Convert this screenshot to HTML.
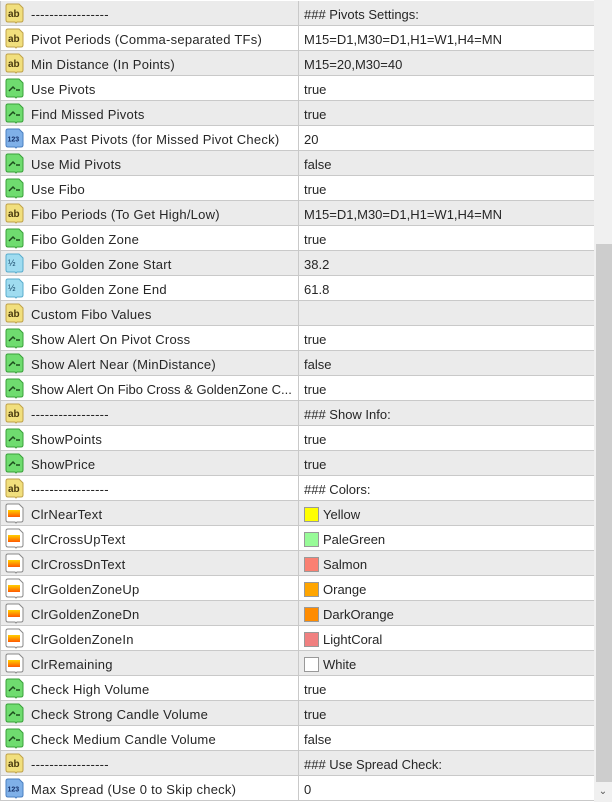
<!DOCTYPE html>
<html><head><meta charset="utf-8"><style>
*{margin:0;padding:0;box-sizing:border-box}
body{width:612px;height:802px;overflow:hidden;background:#fff;font-family:"Liberation Sans",Arial,sans-serif;font-size:13px;color:#262626;position:relative}
.r{position:absolute;left:0;width:594px;height:25px;border-bottom:1px solid #c9c9c9;border-left:1px solid #c9c9c9;margin-top:1px}
.g{background:#ebebeb}
.r svg{position:absolute;left:3px;top:2px;width:21px;height:21px}
.n{position:absolute;left:30px;top:6px;white-space:nowrap;letter-spacing:0.25px}
.v{position:absolute;left:297px;top:0;height:24px;border-left:1px solid #c9c9c9;padding-left:5px;padding-top:6px;width:297px;white-space:nowrap}
.s{display:inline-block;width:15px;height:15px;border:1px solid #999;vertical-align:-3px;margin-right:4px}
#sb{position:absolute;left:594px;top:0;width:18px;height:802px;background:#f0f0f0}
#th{position:absolute;left:596px;top:244px;width:16px;height:538px;background:#cdcdcd}
#dn{position:absolute;left:594px;top:784px;width:18px;height:18px;text-align:center;font-size:10px;color:#555;line-height:16px}
</style></head><body>
<svg width="0" height="0" style="position:absolute">
<defs>
<symbol id="ab" viewBox="0 0 21 21"><path d="M2 3 Q2 1 4 1 H15 L19 5 V17 Q19 19 17 19 H13 L12 20 L11 19 H4 Q2 19 2 17Z" fill="#f1df7d" stroke="#bfa24a"/><text x="4" y="14" font-size="10" font-family="Liberation Sans" font-weight="bold" fill="#4a3a10">ab</text></symbol>
<symbol id="bl" viewBox="0 0 21 21"><path d="M2 3 Q2 1 4 1 H15 L19 5 V17 Q19 19 17 19 H13 L12 20 L11 19 H4 Q2 19 2 17Z" fill="#6fdc6f" stroke="#3aa03a"/><path d="M5 13 L9 9 L11 11 M12 12 H16" stroke="#1d4d1d" stroke-width="1.5" fill="none"/></symbol>
<symbol id="nm" viewBox="0 0 21 21"><path d="M2 3 Q2 1 4 1 H15 L19 5 V17 Q19 19 17 19 H13 L12 20 L11 19 H4 Q2 19 2 17Z" fill="#7fb0e8" stroke="#4a7fc0"/><text x="3.5" y="13.5" font-size="7" font-family="Liberation Sans" font-weight="bold" fill="#14306a">123</text></symbol>
<symbol id="hf" viewBox="0 0 21 21"><path d="M2 3 Q2 1 4 1 H15 L19 5 V17 Q19 19 17 19 H13 L12 20 L11 19 H4 Q2 19 2 17Z" fill="#9fdcf0" stroke="#5aaccc"/><text x="4" y="13" font-size="9" font-family="Liberation Sans" fill="#1a4a6a">½</text></symbol>
<symbol id="cl" viewBox="0 0 21 21"><linearGradient id="og" x1="0" y1="0" x2="0" y2="1"><stop offset="0" stop-color="#ffd000"/><stop offset="1" stop-color="#ff5a00"/></linearGradient><path d="M2 3 Q2 1 4 1 H15 L19 5 V17 Q19 19 17 19 H13 L12 20 L11 19 H4 Q2 19 2 17Z" fill="#fff" stroke="#888"/><rect x="4" y="7" width="12" height="7" fill="url(#og)"/></symbol>
</defs></svg>

<div class="r g" style="top:0"><svg><use href="#ab"/></svg><span class="n">-----------------</span><span class="v">### Pivots Settings:</span></div>
<div class="r" style="top:25px"><svg><use href="#ab"/></svg><span class="n">Pivot Periods (Comma-separated TFs)</span><span class="v">M15=D1,M30=D1,H1=W1,H4=MN</span></div>
<div class="r g" style="top:50px"><svg><use href="#ab"/></svg><span class="n">Min Distance (In Points)</span><span class="v">M15=20,M30=40</span></div>
<div class="r" style="top:75px"><svg><use href="#bl"/></svg><span class="n">Use Pivots</span><span class="v">true</span></div>
<div class="r g" style="top:100px"><svg><use href="#bl"/></svg><span class="n">Find Missed Pivots</span><span class="v">true</span></div>
<div class="r" style="top:125px"><svg><use href="#nm"/></svg><span class="n">Max Past Pivots (for Missed Pivot Check)</span><span class="v">20</span></div>
<div class="r g" style="top:150px"><svg><use href="#bl"/></svg><span class="n">Use Mid Pivots</span><span class="v">false</span></div>
<div class="r" style="top:175px"><svg><use href="#bl"/></svg><span class="n">Use Fibo</span><span class="v">true</span></div>
<div class="r g" style="top:200px"><svg><use href="#ab"/></svg><span class="n">Fibo Periods (To Get High/Low)</span><span class="v">M15=D1,M30=D1,H1=W1,H4=MN</span></div>
<div class="r" style="top:225px"><svg><use href="#bl"/></svg><span class="n">Fibo Golden Zone</span><span class="v">true</span></div>
<div class="r g" style="top:250px"><svg><use href="#hf"/></svg><span class="n">Fibo Golden Zone Start</span><span class="v">38.2</span></div>
<div class="r" style="top:275px"><svg><use href="#hf"/></svg><span class="n">Fibo Golden Zone End</span><span class="v">61.8</span></div>
<div class="r g" style="top:300px"><svg><use href="#ab"/></svg><span class="n">Custom Fibo Values</span><span class="v"></span></div>
<div class="r" style="top:325px"><svg><use href="#bl"/></svg><span class="n">Show Alert On Pivot Cross</span><span class="v">true</span></div>
<div class="r g" style="top:350px"><svg><use href="#bl"/></svg><span class="n">Show Alert Near (MinDistance)</span><span class="v">false</span></div>
<div class="r" style="top:375px"><svg><use href="#bl"/></svg><span class="n" style="letter-spacing:0">Show Alert On Fibo Cross &amp; GoldenZone C...</span><span class="v">true</span></div>
<div class="r g" style="top:400px"><svg><use href="#ab"/></svg><span class="n">-----------------</span><span class="v">### Show Info:</span></div>
<div class="r" style="top:425px"><svg><use href="#bl"/></svg><span class="n">ShowPoints</span><span class="v">true</span></div>
<div class="r g" style="top:450px"><svg><use href="#bl"/></svg><span class="n">ShowPrice</span><span class="v">true</span></div>
<div class="r" style="top:475px"><svg><use href="#ab"/></svg><span class="n">-----------------</span><span class="v">### Colors:</span></div>
<div class="r g" style="top:500px"><svg><use href="#cl"/></svg><span class="n">ClrNearText</span><span class="v"><i class="s" style="background:#ffff00"></i>Yellow</span></div>
<div class="r" style="top:525px"><svg><use href="#cl"/></svg><span class="n">ClrCrossUpText</span><span class="v"><i class="s" style="background:#98fb98"></i>PaleGreen</span></div>
<div class="r g" style="top:550px"><svg><use href="#cl"/></svg><span class="n">ClrCrossDnText</span><span class="v"><i class="s" style="background:#fa8072"></i>Salmon</span></div>
<div class="r" style="top:575px"><svg><use href="#cl"/></svg><span class="n">ClrGoldenZoneUp</span><span class="v"><i class="s" style="background:#ffa500"></i>Orange</span></div>
<div class="r g" style="top:600px"><svg><use href="#cl"/></svg><span class="n">ClrGoldenZoneDn</span><span class="v"><i class="s" style="background:#ff8c00"></i>DarkOrange</span></div>
<div class="r" style="top:625px"><svg><use href="#cl"/></svg><span class="n">ClrGoldenZoneIn</span><span class="v"><i class="s" style="background:#f08080"></i>LightCoral</span></div>
<div class="r g" style="top:650px"><svg><use href="#cl"/></svg><span class="n">ClrRemaining</span><span class="v"><i class="s" style="background:#fff"></i>White</span></div>
<div class="r" style="top:675px"><svg><use href="#bl"/></svg><span class="n">Check High Volume</span><span class="v">true</span></div>
<div class="r g" style="top:700px"><svg><use href="#bl"/></svg><span class="n">Check Strong Candle Volume</span><span class="v">true</span></div>
<div class="r" style="top:725px"><svg><use href="#bl"/></svg><span class="n">Check Medium Candle Volume</span><span class="v">false</span></div>
<div class="r g" style="top:750px"><svg><use href="#ab"/></svg><span class="n">-----------------</span><span class="v">### Use Spread Check:</span></div>
<div class="r" style="top:775px"><svg><use href="#nm"/></svg><span class="n">Max Spread (Use 0 to Skip check)</span><span class="v">0</span></div>
<div id="sb"></div><div id="th"></div><div id="dn">&#8964;</div>
</body></html>
